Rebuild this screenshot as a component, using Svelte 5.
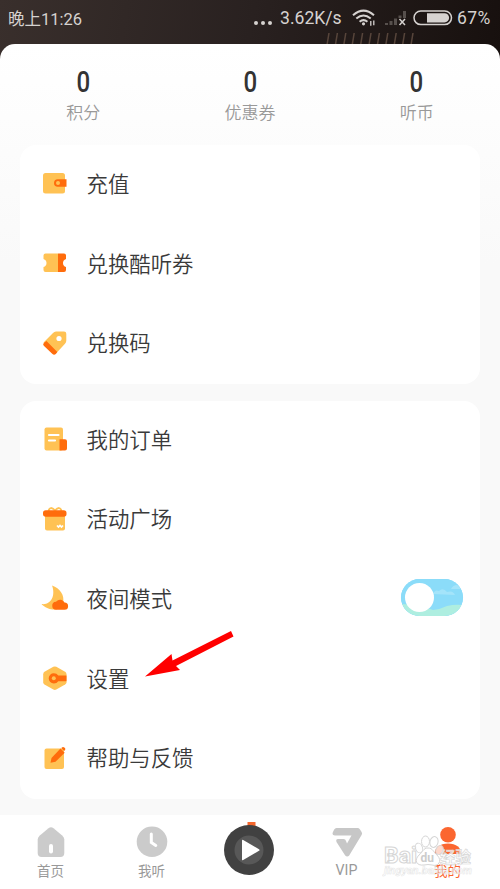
<script>
  const stats = [
    { value: 0, label: "积分" },
    { value: 0, label: "优惠券" },
    { value: 0, label: "听币" }
  ];

  const groups = [
    [
      { icon: "wallet", label: "充值" },
      { icon: "ticket", label: "兑换酷听券" },
      { icon: "tag", label: "兑换码" }
    ],
    [
      { icon: "order", label: "我的订单" },
      { icon: "gift", label: "活动广场" },
      { icon: "moon", label: "夜间模式", toggle: true },
      { icon: "settings", label: "设置" },
      { icon: "edit", label: "帮助与反馈" }
    ]
  ];

  let night = $state(false);
</script>

<div class="screen">
  <header>
    <span class="time">晚上11:26</span>
    <span class="dots"><i></i><i></i><i></i></span>
    <span class="speed">3.62K/s</span>
    <svg class="wifi" width="24" height="18" viewBox="0 0 24 18" fill="none" stroke="#d6d2d0" stroke-width="2">
      <path d="M1 6.2Q11.5-3 22 6.2M4.3 9.5q7.2-6 14.4 0M7.6 12.8q3.9-3.4 7.8 0" />
      <circle cx="11.5" cy="14.8" r="1.6" fill="#d6d2d0" stroke="none" />
      <path d="M18.8 12v4.8M21.8 11.5v4.8" stroke-width="1.3" />
    </svg>
    <svg class="signal" width="23" height="16" viewBox="0 0 23 16">
      <path d="M1 15v-2h3v2zM5.5 15v-4h3v4zM10 15V8.5h3V15zM14.5 8V5.5h3V8zM19 8V1h3v7z" fill="#57504d" />
      <path d="m15.5 9 5.5 6m0-6-5.5 6" stroke="#d6d2d0" stroke-width="1.5" />
    </svg>
    <svg class="battery" width="40" height="16" viewBox="0 0 40 16">
      <rect x="1" y="1" width="37.5" height="13.6" rx="6.8" fill="none" stroke="#d6d2d0" stroke-width="1.5" />
      <path d="M14 3.2h17.500a4.600 4.600 0 0 1 0 9.200H14z" fill="#d6d2d0" />
    </svg>
    <span class="percent">67%</span>
    <svg class="stripes" width="90" height="11" viewBox="0 0 90 11" stroke="#57453b" stroke-width="1.5">
      {#each Array(11) as _, i}
        <path d="M{3 + i * 8.4} 0l-2 12" />
      {/each}
    </svg>
  </header>

  <main>
    <section class="stats">
      {#each stats as stat}
        <div class="stat">
          <b>{stat.value}</b>
          <span>{stat.label}</span>
        </div>
      {/each}
    </section>

    {#each groups as rows}
      <section class="card">
        {#each rows as row}
          <div class="row">
            <svg class="icon" width="28" height="28" viewBox="0 0 28 28">
              {#if row.icon === "wallet"}
                <rect x="2" y="4" width="22" height="20.5" rx="2.5" fill="#ffc254" />
                <path d="M16.8 10.2H25.5v7.6h-8.7a3.8 3.8 0 0 1 0-7.6z" fill="#ff6c0c" />
                <circle cx="17" cy="14" r="2" fill="#ffc254" />
              {:else if row.icon === "ticket"}
                <path d="M4.5 4.5H17V23H4.5Q2.5 23 2.5 21v-3q3-1 3-4t-3-4V6.5q0-2 2-2z" fill="#ffc254" />
                <path d="M17 4.5h6q2 0 2 2V10q-3 1-3 4t3 4v3q0 2-2 2h-6z" fill="#ff6c0c" />
              {:else if row.icon === "tag"}
                <path d="M15 2.5h8q2.3 0 2.3 2.3v6.7q0 2-1.3 3.3L14.5 25 2.5 13.5 12 4q1.2-1.5 3-1.5z" fill="#ffc254" />
                <path d="m5.5 12 10.8 11-1.5 2q-1.8 1.5-3.6-.3L2.8 16.8Q1.5 15.5 2.8 14z" fill="#ff6c0c" />
                <circle cx="18" cy="9.5" r="2.6" fill="#fff" />
              {:else if row.icon === "order"}
                <rect x="3.5" y="2.5" width="18.5" height="23" rx="2" fill="#ffc254" />
                <path d="M8 10h9.5M8 15.5h6" stroke="#fff" stroke-width="2.2" stroke-linecap="round" />
                <path d="M18.5 14.3H24a2 2 0 0 1 2 2v7.2a2 2 0 0 1-2 2h-5.5z" fill="#ff6c0c" />
              {:else if row.icon === "gift"}
                <path d="M7.5 6Q9 .5 14 5.5q5-5 6.5.5" fill="none" stroke="#ffc254" stroke-width="2" />
                <path d="M4 10h20v13.500q0 2-2 2H6q-2 0-2-2z" fill="#ffc254" />
                <rect x="2" y="5.3" width="23.5" height="6.5" rx="2.8" fill="#ff6c0c" />
                <path d="m16 20.5 1.500 1.500 1.500-1.500 1.500 1.500 1.500-1.500" fill="none" stroke="#fff" stroke-width="1.7" />
              {:else if row.icon === "moon"}
                <path d="M11 1.500c8 2.500 13 10 11 17.500-1 4-4 6.500-8.500 6.500-5 0-10-2-13-5.500 9 1.500 14.500-8 10.500-18.500z" fill="#ffc254" />
                <path d="M15.500 25.800a4 4 0 0 1-.5-8 5 5 0 0 1 8.500.8 3.600 3.600 0 0 1 0 7.200z" fill="#ff6c0c" />
              {:else if row.icon === "settings"}
                <path d="M12.3 2.8q1.500-.8 3 0l8.800 5q1.400.8 1.400 2.400v8q0 1.500-1.400 2.300l-8.800 5q-1.500.8-3 0l-8.800-5Q2.200 19.700 2.200 18.200v-8q0-1.600 1.300-2.400z" fill="#ffc254" />
                <path d="M12.8 9.200q3 0 4.500 2.200h8.200v5.800h-8.200q-1.500 2.200-4.500 2.200a5.100 5.100 0 0 1 0-10.200z" fill="#ff6c0c" />
                <circle cx="12.8" cy="14.3" r="2" fill="#ffc254" />
              {:else}
                <rect x="3.5" y="4.5" width="19.5" height="20.5" rx="2" fill="#ffc254" />
                <path d="m10.500 14 9-9.500 4.200 4.200-9.200 9-5 1z" fill="#ff6c0c" />
                <path d="m20.300 4 1-.8q1-.7 2 .3l.6.600q1 1 .1 2l-.8.900z" fill="#ff6c0c" />
              {/if}
            </svg>
            <span>{row.label}</span>
            {#if row.toggle}
              <button class="switch" class:on={night} aria-label="夜间模式" onclick={() => (night = !night)}>
                <svg width="62" height="37" viewBox="0 0 62 37">
                  <rect width="62" height="37" fill="#8bdcf9" />
                  <path d="M32 15q2-5 6-3 4-4 8 1 6-2 8 3zM50 10q2-4 6-4l5 4z" fill="#a4e4fa" />
                  <path d="M0 25q18 0 32 6 8-1 14-4 8-2 16-1v11H0z" fill="#aeeee0" />
                </svg>
                <i></i>
              </button>
            {/if}
          </div>
        {/each}
      </section>
    {/each}
  </main>

  <nav>
    <div class="tab">
      <svg width="32" height="32" viewBox="0 0 32 32">
        <path d="M13.5 2.2q2.500-1.800 5 0l8.700 7.300q2.100 1.800 2.100 4V27q0 4-4 4H6.700q-4 0-4-4V13.500q0-2.200 2.100-4z" fill="#cbcbcb" />
        <path d="M16 20v5.500" stroke="#fff" stroke-width="4" stroke-linecap="round" />
      </svg>
      <span>首页</span>
    </div>
    <div class="tab">
      <svg width="32" height="32" viewBox="0 0 32 32">
        <circle cx="16" cy="15.8" r="15.3" fill="#cbcbcb" />
        <path d="M15.3 8v8.500l4.500 3" fill="none" stroke="#fff" stroke-width="3" stroke-linecap="round" />
      </svg>
      <span>我听</span>
    </div>
    <div class="player">
      <svg width="52" height="56" viewBox="0 0 52 56">
        <rect x="24.5" y="2" width="8" height="6" fill="#f4662c" />
        <circle cx="26" cy="30" r="25" fill="#414141" />
        <circle cx="26" cy="30" r="14.5" fill="#585858" />
        <path d="M19 20.500v19q0 1.200 1.200.6l15.800-9.300q1.200-.8 0-1.600l-15.800-9.300q-1.200-.5-1.200.6z" fill="#fff" />
      </svg>
    </div>
    <div class="tab vip">
      <svg width="32" height="32" viewBox="0 0 32 32">
        <path d="M5.500 2h21q1.500 0 2.500 1.400l1.600 2.500q1 1.500 0 3L18.200 29.500q-2 2-4 0L5.500 16q-1-3 1.500-3h5.500q2 0 2.500 2l1 2.500L20.500 9.500H4Q1.500 9.500 1.500 7.800q0-1 .7-2.300l1-2Q4 2 5.500 2z" fill="#c7c7c7" />
      </svg>
      <span>VIP</span>
    </div>
    <div class="tab active">
      <svg width="32" height="32" viewBox="0 0 32 32">
        <circle cx="16" cy="8.700" r="7.800" fill="#fb6630" />
        <path d="M3 28q-1-4 3-7.500 4-3 10-3t10 3q3 3 3 7.500z" fill="#fb6630" />
      </svg>
      <span>我的</span>
    </div>
  </nav>

  <svg class="arrow" width="90" height="48" viewBox="0 0 90 48">
    <path d="M0 45.500 26.500 23l1 6.500L86 0l2.500 5.500L31 35l4 4z" fill="#f00" />
  </svg>

  <svg class="watermark" width="100" height="46" viewBox="0 0 100 46">
    <g fill="#fff" fill-opacity=".75" stroke="#d6d6d6" stroke-width="1">
      <text x="2" y="29" font-size="22" font-weight="bold" textLength="33" lengthAdjust="spacingAndGlyphs">Bai</text>
      <ellipse cx="37" cy="14" rx="3.500" ry="5" transform="rotate(-20 37 14)" />
      <ellipse cx="43.500" cy="7.500" rx="4" ry="5.500" />
      <ellipse cx="52" cy="8" rx="4" ry="5.500" transform="rotate(15 52 8)" />
      <ellipse cx="57.500" cy="16" rx="3.500" ry="4.800" transform="rotate(25 57.500 16)" />
      <path d="M46 14c5 0 5 4 9 7 6 6 1 12-5 10q-4-1-8 0c-8 1-10-5-5-10 4-3 4-7 9-7z" />
      <text x="58" y="29" font-size="16" font-weight="bold" textLength="31" lengthAdjust="spacingAndGlyphs" stroke-width=".7">经验</text>
    </g>
    <text x="38.500" y="28" font-size="12" font-weight="bold" fill="#ccc">du</text>
    <text class="url" x="2" y="40" textLength="88" lengthAdjust="spacingAndGlyphs">jingyan.baidu.com</text>
  </svg>
</div>

<style>
  :global(body) {
    margin: 0;
    font-family: Roboto, "Noto Sans CJK SC", sans-serif;
  }
  .screen {
    position: relative;
    display: flex;
    flex-direction: column;
    width: 500px;
    height: 889px;
    overflow: hidden;
    background: linear-gradient(100deg, #392f2c, #292120 50%, #17100e) 0 0 / 100% 64px no-repeat;
  }
  header {
    position: relative;
    display: flex;
    align-items: center;
    flex: none;
    height: 35px;
    margin-bottom: 9px;
    padding: 0 9px 0 8px;
    color: #d6d2d0;
    font-size: 17px;
    white-space: nowrap;
  }
  .time {
    margin: 1px auto 0 0;
    font-size: 16.5px;
  }
  .dots {
    display: flex;
    gap: 3px;
    margin: 10px 8px 0 0;
  }
  .dots i {
    width: 4px;
    height: 4px;
    border-radius: 50%;
    background: #d6d2d0;
  }
  .speed {
    width: 62px;
    margin-right: 10px;
    font-size: 17.6px;
  }
  .wifi {
    margin-right: 8px;
  }
  .signal {
    margin-right: 6px;
  }
  .battery {
    margin-right: 4px;
  }
  .percent {
    width: 34px;
    font-size: 17.5px;
    letter-spacing: 0.4px;
  }
  .stripes {
    position: absolute;
    left: 326px;
    top: 33px;
  }
  main {
    flex: none;
    box-sizing: border-box;
    height: 771px;
    padding: 0 20px;
    border-radius: 15px 15px 0 0;
    background: linear-gradient(#fff, #f9f9f9 220px);
  }
  .stats {
    display: flex;
    height: 101.2px;
    margin: 0 -20px;
  }
  .stat {
    flex: 1;
    display: flex;
    flex-direction: column;
    align-items: center;
    color: #999;
    font-size: 17px;
    font-weight: 350;
    line-height: 24px;
  }
  .stat b {
    margin-top: 21px;
    height: 36px;
    color: #333;
    font-size: 29px;
    line-height: 34px;
    font-weight: 500;
    transform: scaleX(0.83);
  }
  .card {
    margin-bottom: 17px;
    border-radius: 16px;
    background: #fff;
  }
  .row {
    display: flex;
    align-items: center;
    height: 79.6px;
    padding: 0 17px 0 21px;
    color: #3a3a3a;
    font-size: 21.4px;
    font-weight: 350;
  }
  .row span {
    margin-top: -5px;
    margin-right: auto;
  }
  .icon {
    margin: -3px 17.5px 0 0;
  }
  .switch {
    position: relative;
    width: 62px;
    height: 37px;
    margin-top: -4px;
    padding: 0;
    border: none;
    border-radius: 19px;
    overflow: hidden;
    background: #8bdcf9;
  }
  .switch svg {
    display: block;
  }
  .switch i {
    position: absolute;
    left: 4px;
    top: 4px;
    width: 29px;
    height: 29px;
    border-radius: 50%;
    background: #fff;
  }
  .switch.on i {
    left: 29px;
  }
  nav {
    display: flex;
    flex: 1;
    background: #fff;
  }
  .tab {
    display: flex;
    flex-direction: column;
    align-items: center;
    width: 101px;
    padding-top: 11px;
    color: #999;
    font-size: 13.5px;
    line-height: 20px;
  }
  .tab span {
    margin-top: 3px;
  }
  .vip span {
    margin-top: 2px;
    font-size: 14.2px;
  }
  .player {
    width: 94px;
    padding-top: 5px;
    text-align: center;
  }
  .active {
    color: #fb6630;
  }
  .arrow {
    position: absolute;
    left: 145px;
    top: 631px;
  }
  .watermark {
    position: absolute;
    left: 382px;
    top: 834px;
  }
  .url {
    fill: #fff;
    fill-opacity: 0.5;
    stroke: #e0e0e0;
    stroke-opacity: 0.8;
    stroke-width: 0.5;
    font: italic bold 10px Roboto, sans-serif;
  }
</style>
